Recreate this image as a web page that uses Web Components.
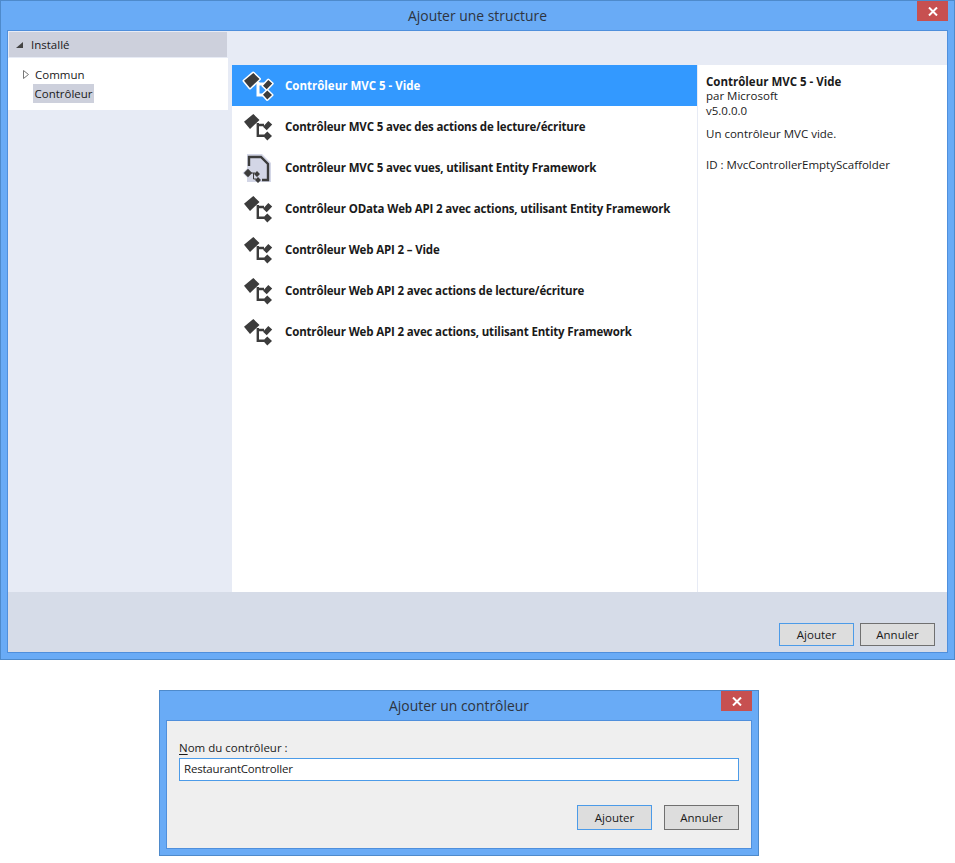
<!DOCTYPE html>
<html lang="fr">
<head>
<meta charset="utf-8">
<title>Ajouter une structure</title>
<style>
  html, body { margin: 0; padding: 0; background: #fff; }
  body { font: 11.5px "Open Sans", "Noto Sans", sans-serif; color: #1a1a1a; }
  #scaffold { width: 955px; height: 660px; }
  #controller { width: 600px; height: 166px; margin: 30px 0 0 159px; }
</style>
</head>
<body>
<app-window id="scaffold" heading="Ajouter une structure">
  <app-scaffold-dialog></app-scaffold-dialog>
</app-window>
<app-window id="controller" heading="Ajouter un contrôleur">
  <app-name-dialog></app-name-dialog>
</app-window>

<script>
// window frame with title bar and close button
const windowTemplate = document.createElement('template');
windowTemplate.innerHTML = `
  <style>
    :host {
      display: block;
      box-sizing: border-box;
      background: #69abf6;
      border: 1px solid #4e8acb;
      padding: 0 6px 6px 6px;
    }
    .frame { display: flex; flex-direction: column; height: 100%; }
    .bar {
      flex: none;
      height: 29px;
      display: flex;
      justify-content: center;
      align-items: center;
      position: relative;
      font-size: 13.9px;
      color: #2e3440;
    }
    .close {
      position: absolute;
      right: 0;
      top: 0;
      width: 31px;
      height: 20px;
      background: #c75050;
      display: flex;
      align-items: center;
      justify-content: center;
    }
    .body {
      flex: 1;
      min-height: 0;
      border: 1px solid #4f8fdc;
      display: flex;
    }
  </style>
  <div class="frame">
    <div class="bar">
      <span class="title"></span>
      <div class="close">
        <svg width="10" height="9" viewBox="0 0 10 9"><path d="M1 .5 9 8.5M9 .5 1 8.5" stroke="#fff" stroke-width="2" fill="none"/></svg>
      </div>
    </div>
    <div class="body"><slot></slot></div>
  </div>
`;

class AppWindow extends HTMLElement {
  constructor() {
    super()
    this.attachShadow({ mode: 'open' })
    this.shadowRoot.appendChild(windowTemplate.content.cloneNode(true))
  }

  connectedCallback() {
    this.shadowRoot.querySelector('.title').textContent = this.getAttribute('heading') || ''
  }
}

// flat grey button, "primary" gets the blue border
class AppButton extends HTMLElement {
  constructor() {
    super()
    this.attachShadow({ mode: 'open' })
    this.shadowRoot.innerHTML = `
      <style>
        :host {
          display: flex;
          box-sizing: border-box;
          width: 75px;
          height: var(--button-height, 23px);
          align-items: center;
          justify-content: center;
          background: #dddddd;
          border: 1px solid #707070;
          color: #1a1a1a;
        }
        :host([primary]) { border-color: #4c9be8; }
      </style>
      <slot></slot>
    `
  }
}

// scaffold glyph: big slanted block, connector, two small diamonds
class AppScaffoldIcon extends HTMLElement {
  constructor() {
    super()
    this.attachShadow({ mode: 'open' })
  }

  connectedCallback() {
    const kind = this.getAttribute('kind') || 'plain'
    const dark = '#3c3c3c'
    const blocks = 'M1 10.8 10.3 3 16.5 9 7 18ZM20 15.7 25.3 10 29.2 13.5 23.7 19.2ZM20 24.8 24.3 20.5 29 25 24.3 29.4Z'
    let inner = ''
    if (kind === 'doc') {
      inner = `
        <path d="M4 2H19L28 11V30H4Z" fill="#d3d6e6"/>
        <path d="M6 14V5H18L25 12V28H19" fill="none" stroke="${dark}" stroke-width="2.4"/>
        <path d="M-.5 21 5 15.5 10.5 21 5 26.5Z" fill="#d3d6e6"/>
        <path d="M.8 21 5 16.8 9.2 21 5 25.2Z" fill="${dark}"/>
        <path d="M11 22 14 19 17 22 14 25ZM12 28 15 25 18 28 15 31Z" fill="${dark}"/>
        <path d="M8 21H12M10.5 21V27H13" fill="none" stroke="${dark}" stroke-width="1"/>`
    } else if (kind === 'selected') {
      inner = `
        <path d="${blocks}" fill="${dark}" stroke="#fff" stroke-width="3" stroke-linejoin="round"/>
        <path d="M14 14H21M15 12V25H21" fill="none" stroke="#fff" stroke-width="3"/>
        <path d="${blocks}" fill="${dark}"/>`
    } else {
      inner = `
        <path d="M14 14H21M14.8 12V24.8H21" fill="none" stroke="${dark}" stroke-width="2.4"/>
        <path d="${blocks}" fill="${dark}"/>`
    }
    this.shadowRoot.innerHTML = `
      <style>:host { display: block; width: 32px; height: 32px; } svg { display: block; overflow: visible; }</style>
      <svg width="32" height="32" viewBox="0 0 32 32">${inner}</svg>
    `
  }
}

// one row in the middle list
class AppTemplateRow extends HTMLElement {
  constructor() {
    super()
    this.attachShadow({ mode: 'open' })
  }

  connectedCallback() {
    const selected = this.hasAttribute('selected')
    const kind = selected ? 'selected' : (this.getAttribute('icon') || 'plain')
    this.shadowRoot.innerHTML = `
      <style>
        :host {
          display: flex;
          height: 41px;
          align-items: center;
          padding-left: 11px;
          gap: 10px;
          font-weight: 700;
          letter-spacing: -0.16px;
          white-space: nowrap;
          color: #1a1a1a;
        }
        :host([selected]) { background: #3399ff; color: #fff; letter-spacing: 0; }
      </style>
      <app-scaffold-icon kind="${kind}"></app-scaffold-icon>
      <slot></slot>
    `
  }
}

const scaffoldTemplate = document.createElement('template');
scaffoldTemplate.innerHTML = `
  <style>
    :host {
      flex: 1;
      display: flex;
      flex-direction: column;
      background: #e7ebf5;
      min-width: 0;
      color: #1a1a1a;
    }
    .main { flex: 1; display: flex; min-height: 0; }
    .side { width: 220px; flex: none; display: flex; flex-direction: column; }
    .installed {
      height: 25px;
      margin: 1px 1px 1px 1px;
      background: #cdd0dc;
      display: flex;
      align-items: center;
      padding-left: 7px;
      gap: 8px;
    }
    .tree {
      height: 52px;
      background: #fff;
      box-sizing: border-box;
      padding: 7px 0 0 15px;
    }
    .node { height: 19px; display: flex; align-items: center; gap: 6px; }
    .leaf {
      margin-left: 10px;
      width: 61px;
      justify-content: center;
      background: #cdd0dc;
    }
    .center { flex: 1; display: flex; flex-direction: column; margin-left: 4px; min-width: 0; }
    .strip { height: 34px; flex: none; }
    .panes { flex: 1; display: flex; background: #fff; min-height: 0; }
    .list { width: 465px; flex: none; }
    .detail {
      flex: 1;
      border-left: 1px solid #e7ebf5;
      padding: 9px 8px 0 8px;
      line-height: 15px;
    }
    .detail b { font-weight: 700; display: block; margin-bottom: -1px; }
    .detail div { white-space: nowrap; }
    .desc { margin-top: 8px; }
    .id { margin-top: 16px; }
    .footer {
      flex: none;
      height: 60px;
      background: #d6dce8;
      display: flex;
      justify-content: flex-end;
      align-items: flex-end;
      gap: 6px;
      padding: 0 12px 6px 0;
      box-sizing: border-box;
    }
  </style>
  <div class="main">
    <div class="side">
      <div class="installed">
        <svg width="7" height="6" viewBox="0 0 7 6"><path d="M7 0V6H0Z" fill="#444"/></svg>
        <span>Installé</span>
      </div>
      <div class="tree">
        <div class="node">
          <svg width="6" height="9" viewBox="0 0 6 9"><path d="M.5.5 5.5 4.5.5 8.5Z" fill="#fff" stroke="#777"/></svg>
          <span>Commun</span>
        </div>
        <div class="node leaf">Contrôleur</div>
      </div>
    </div>
    <div class="center">
      <div class="strip"></div>
      <div class="panes">
        <div class="list">
          <app-template-row selected>Contrôleur MVC 5 - Vide</app-template-row>
          <app-template-row>Contrôleur MVC 5 avec des actions de lecture/écriture</app-template-row>
          <app-template-row icon="doc">Contrôleur MVC 5 avec vues, utilisant Entity Framework</app-template-row>
          <app-template-row>Contrôleur OData Web API 2 avec actions, utilisant Entity Framework</app-template-row>
          <app-template-row>Contrôleur Web API 2 – Vide</app-template-row>
          <app-template-row>Contrôleur Web API 2 avec actions de lecture/écriture</app-template-row>
          <app-template-row>Contrôleur Web API 2 avec actions, utilisant Entity Framework</app-template-row>
        </div>
        <div class="detail">
          <b>Contrôleur MVC 5 - Vide</b>
          <div>par Microsoft</div>
          <div>v5.0.0.0</div>
          <div class="desc">Un contrôleur MVC vide.</div>
          <div class="id">ID : MvcControllerEmptyScaffolder</div>
        </div>
      </div>
    </div>
  </div>
  <div class="footer">
    <app-button primary>Ajouter</app-button>
    <app-button>Annuler</app-button>
  </div>
`;

class AppScaffoldDialog extends HTMLElement {
  constructor() {
    super()
    this.attachShadow({ mode: 'open' })
    this.shadowRoot.appendChild(scaffoldTemplate.content.cloneNode(true))
  }
}

const nameTemplate = document.createElement('template');
nameTemplate.innerHTML = `
  <style>
    :host {
      flex: 1;
      display: flex;
      flex-direction: column;
      background: #efefef;
      padding: 20px 12px 18px 12px;
      box-sizing: border-box;
      min-width: 0;
      color: #1a1a1a;
      --button-height: 25px;
    }
    label { display: block; height: 17px; line-height: 14px; }
    u { text-underline-offset: 2px; }
    .input {
      box-sizing: border-box;
      height: 23px;
      background: #fff;
      border: 1px solid #4c9be8;
      display: flex;
      align-items: center;
      padding: 0 0 2px 4px;
      letter-spacing: -0.2px;
    }
    .buttons {
      margin-top: auto;
      display: flex;
      justify-content: flex-end;
      gap: 12px;
    }
  </style>
  <label><u>N</u>om du contrôleur :</label>
  <div class="input">RestaurantController</div>
  <div class="buttons">
    <app-button primary>Ajouter</app-button>
    <app-button>Annuler</app-button>
  </div>
`;

class AppNameDialog extends HTMLElement {
  constructor() {
    super()
    this.attachShadow({ mode: 'open' })
    this.shadowRoot.appendChild(nameTemplate.content.cloneNode(true))
  }
}

customElements.define('app-window', AppWindow)
customElements.define('app-button', AppButton)
customElements.define('app-scaffold-icon', AppScaffoldIcon)
customElements.define('app-template-row', AppTemplateRow)
customElements.define('app-scaffold-dialog', AppScaffoldDialog)
customElements.define('app-name-dialog', AppNameDialog)
</script>
</body>
</html>
